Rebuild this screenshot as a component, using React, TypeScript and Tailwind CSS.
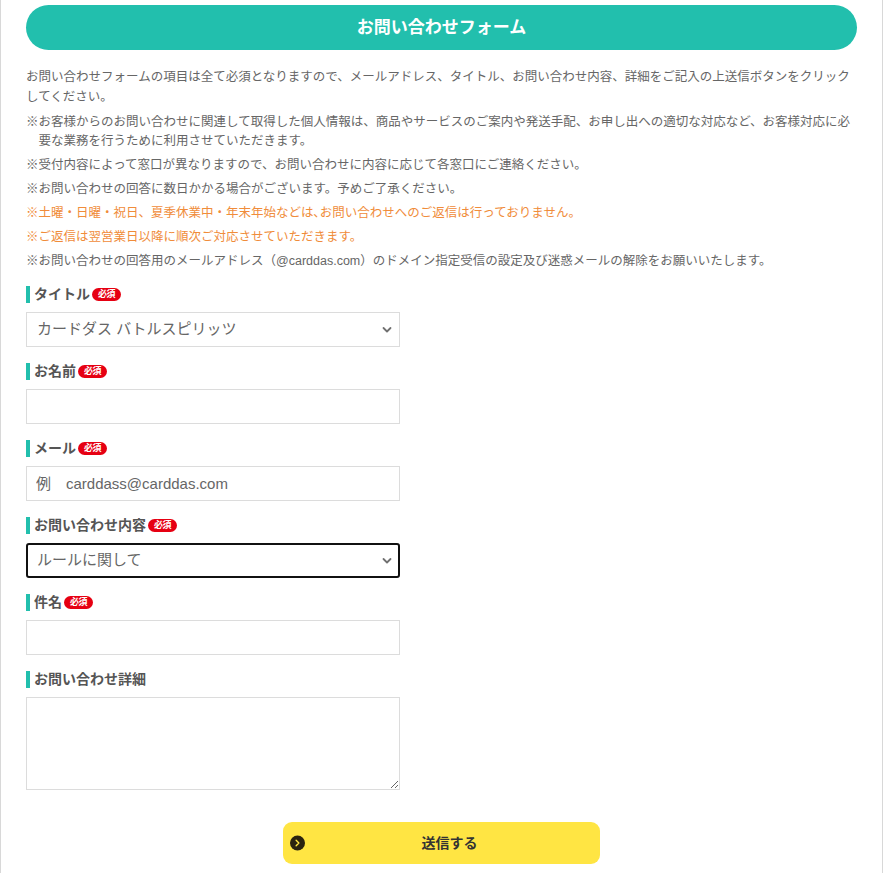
import { ChevronRight } from "lucide-react";

const font = {
  fontFamily: '"Liberation Sans", "Noto Sans CJK JP", sans-serif',
};

function Chevron() {
  return (
    <svg
      width="10"
      height="7"
      viewBox="0 0 10 7"
      className="pointer-events-none absolute right-[8px] top-1/2 -translate-y-1/2"
    >
      <path d="M1.5 1.5 L5 5 L8.5 1.5" fill="none" stroke="#707070" strokeWidth="1.8" strokeLinecap="round" strokeLinejoin="round" />
    </svg>
  );
}

function Label({ text, required = true }: { text: string; required?: boolean }) {
  return (
    <div className="mb-[9px] flex h-[18px] items-center">
      <span className="mr-[4px] h-[17px] w-[4px] bg-[#22bfad]" />
      <span className="text-[14px] font-bold leading-[18px] text-[#555]">{text}</span>
      {required && (
        <span className="ml-[2px] flex h-[13px] w-[29px] items-center justify-center rounded-full bg-[#e60012] text-[9px] font-bold leading-none tracking-[-0.5px] text-white">
          必須
        </span>
      )}
    </div>
  );
}

const notes: { text: string; orange?: boolean }[] = [
  { text: "※お客様からのお問い合わせに関連して取得した個人情報は、商品やサービスのご案内や発送手配、お申し出への適切な対応など、お客様対応に必要な業務を行うために利用させていただきます。" },
  { text: "※受付内容によって窓口が異なりますので、お問い合わせに内容に応じて各窓口にご連絡ください。" },
  { text: "※お問い合わせの回答に数日かかる場合がございます。予めご了承ください。" },
  { text: "※土曜・日曜・祝日、夏季休業中・年末年始などは､お問い合わせへのご返信は行っておりません。", orange: true },
  { text: "※ご返信は翌営業日以降に順次ご対応させていただきます。", orange: true },
  { text: "※お問い合わせの回答用のメールアドレス（@carddas.com）のドメイン指定受信の設定及び迷惑メールの解除をお願いいたします。" },
];

export default function App() {
  return (
    <div className="min-h-screen bg-white" style={font}>
      <div className="w-[883px] border-x border-[#d8d8d8] px-[25px] pb-[20px] pt-[5px]">
        <h1 className="flex h-[45px] items-center justify-center rounded-full bg-[#22bfad] text-[17px] font-bold text-white">
          お問い合わせフォーム
        </h1>

        <p className="mt-[17px] text-[12.5px] leading-[20px] text-[#666]">
          お問い合わせフォームの項目は全て必須となりますので、メールアドレス、タイトル、お問い合わせ内容、詳細をご記入の上送信ボタンをクリックしてください。
        </p>

        <div className="mt-[6px]">
          {notes.map((n) => (
            <p
              key={n.text}
              className={`mb-[5px] pl-[1em] -indent-[1em] text-[12.5px] leading-[19px] ${n.orange ? "text-[#f08c3a]" : "text-[#666]"}`}
            >
              {n.text}
            </p>
          ))}
        </div>

        <form className="mt-[14px] w-[374px]" onSubmit={(e) => e.preventDefault()}>
          <div className="mb-[15px]">
            <Label text="タイトル" />
            <div className="relative">
              <select className="h-[35px] w-full appearance-none border border-[#dcdcdc] bg-white px-[10px] text-[15px] text-[#666] outline-none">
                <option>カードダス バトルスピリッツ</option>
              </select>
              <Chevron />
            </div>
          </div>

          <div className="mb-[15px]">
            <Label text="お名前" />
            <input className="h-[35px] w-full border border-[#dcdcdc] px-[9px] text-[15px] text-[#666] outline-none" />
          </div>

          <div className="mb-[15px]">
            <Label text="メール" />
            <input
              placeholder="例　carddass@carddas.com"
              className="h-[35px] w-full border border-[#dcdcdc] px-[9px] text-[15px] text-[#666] outline-none placeholder:text-[#666]"
            />
          </div>

          <div className="mb-[15px]">
            <Label text="お問い合わせ内容" />
            <div className="relative">
              <select className="h-[35px] w-full appearance-none rounded-[3px] border-2 border-[#111] bg-white px-[9px] text-[15px] text-[#666] outline-none">
                <option>ルールに関して</option>
              </select>
              <Chevron />
            </div>
          </div>

          <div className="mb-[15px]">
            <Label text="件名" />
            <input className="h-[35px] w-full border border-[#dcdcdc] px-[9px] text-[15px] text-[#666] outline-none" />
          </div>

          <div>
            <Label text="お問い合わせ詳細" required={false} />
            <textarea className="block h-[93px] w-full border border-[#dcdcdc] px-[9px] py-[6px] text-[15px] text-[#666] outline-none" />
          </div>
        </form>

        <div className="mt-[32px] flex justify-center">
          <button className="relative flex h-[42px] w-[317px] items-center justify-center rounded-[9px] bg-[#ffe543] pl-[16px] text-[14px] font-bold text-[#333]">
            <span className="absolute left-[7px] top-1/2 flex h-[15px] w-[15px] -translate-y-1/2 items-center justify-center rounded-full bg-[#2a230f]">
              <ChevronRight size={11} strokeWidth={3} color="#ffe543" />
            </span>
            送信する
          </button>
        </div>
      </div>
    </div>
  );
}
